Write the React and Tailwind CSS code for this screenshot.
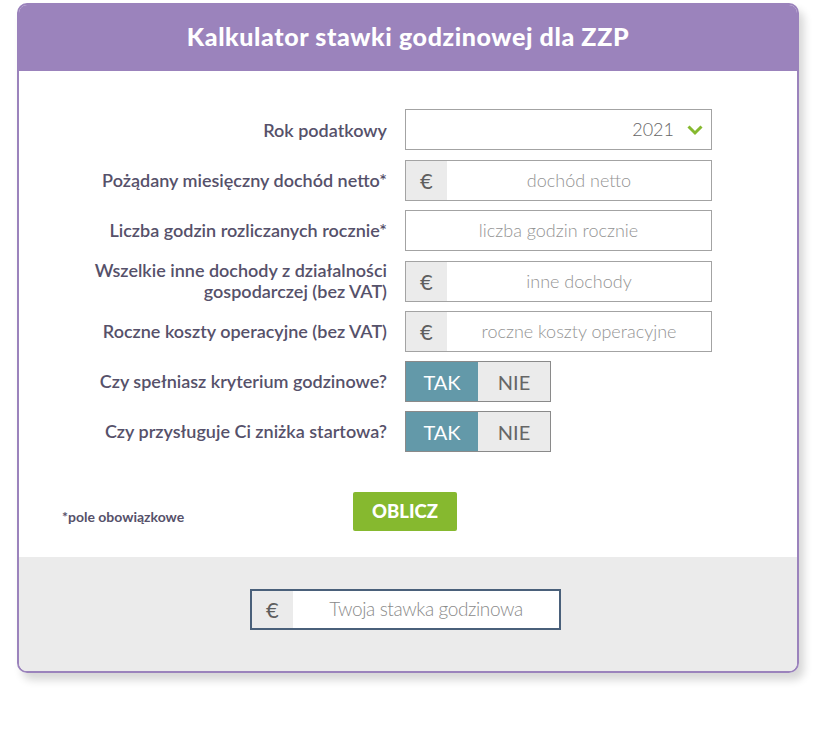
import { useState } from 'react';

const labelCls = 'text-right text-[18px] font-semibold leading-[21px] text-[#56516a]';

function EuroInput({ placeholder }) {
  return (
    <div className="flex h-[41px] w-[307px] border border-[#a3a3a3] bg-white">
      <div className="flex w-[41px] items-center justify-center bg-[#ebebeb] text-[22px] text-[#5e5e5e]">€</div>
      <input
        className="min-w-0 flex-1 bg-transparent text-center text-[18px] font-light text-[#555] outline-none placeholder:text-[#949494]"
        placeholder={placeholder}
      />
    </div>
  );
}

function Toggle({ value, onChange }) {
  return (
    <div className="flex h-[41px] w-[146px] border border-[#8a8a8a]">
      <button
        onClick={() => onChange(true)}
        className={`flex-1 text-[20px] ${value ? 'bg-[#6399a9] text-white' : 'bg-[#ebebeb] text-[#666]'}`}
      >
        TAK
      </button>
      <button
        onClick={() => onChange(false)}
        className={`flex-1 text-[20px] ${!value ? 'bg-[#6399a9] text-white' : 'bg-[#ebebeb] text-[#666]'}`}
      >
        NIE
      </button>
    </div>
  );
}

export default function App() {
  const [hours, setHours] = useState(true);
  const [start, setStart] = useState(true);

  return (
    <div className="min-h-screen bg-white pt-[3px] font-['Lato',sans-serif]">
      <div className="ml-[17px] w-[782px] overflow-hidden rounded-[10px] border-2 border-[#9b83bc] shadow-[5px_7px_9px_rgba(0,0,0,0.16)]">
        {/* naglowek */}
        <div className="flex h-[66px] items-center justify-center bg-[#9b83bc] pb-[2px]">
          <h1 className="text-[25px] font-black tracking-[0.6px] text-white">Kalkulator stawki godzinowej dla ZZP</h1>
        </div>

        <div className="bg-white pb-[26px] pt-[38px]">
          <div className="grid grid-cols-[368px_307px] items-center gap-x-[18px] gap-y-[9px]">
            <div className={labelCls}>Rok podatkowy</div>
            <div className="mb-[1px] flex h-[41px] w-[307px] items-center justify-end border border-[#a3a3a3] bg-white pr-[8px]">
              <span className="mr-[13px] text-[18px] font-light text-[#666]">2021</span>
              <svg width="16" height="12" viewBox="0 0 16 12" fill="none">
                <path d="M1.5 2.5 L8 9 L14.5 2.5" stroke="#86b92f" strokeWidth="3" />
              </svg>
            </div>

            <div className={labelCls}>Pożądany miesięczny dochód netto*</div>
            <EuroInput placeholder="dochód netto" />

            <div className={labelCls}>Liczba godzin rozliczanych rocznie*</div>
            <div className="flex h-[41px] w-[307px] border border-[#a3a3a3] bg-white">
              <input
                className="min-w-0 flex-1 bg-transparent text-center text-[18px] font-light text-[#555] outline-none placeholder:text-[#949494]"
                placeholder="liczba godzin rocznie"
              />
            </div>

            <div className={labelCls}>
              Wszelkie inne dochody z działalności
              <br />
              gospodarczej (bez VAT)
            </div>
            <EuroInput placeholder="inne dochody" />

            <div className={labelCls}>Roczne koszty operacyjne (bez VAT)</div>
            <EuroInput placeholder="roczne koszty operacyjne" />

            <div className={labelCls}>Czy spełniasz kryterium godzinowe?</div>
            <Toggle value={hours} onChange={setHours} />

            <div className={labelCls}>Czy przysługuje Ci zniżka startowa?</div>
            <Toggle value={start} onChange={setStart} />
          </div>

          <div className="mt-[40px] flex items-center">
            <span className="ml-[43px] w-[291px] pt-[9px] text-[14px] font-bold text-[#56516a]">*pole obowiązkowe</span>
            <button className="h-[39px] w-[104px] rounded-[2px] bg-[#86b92f] text-[18.5px] font-black text-white">OBLICZ</button>
          </div>
        </div>

        {/* wynik */}
        <div className="flex justify-center bg-[#ebebeb] pb-[41px] pt-[32px]">
          <div className="ml-[-5px] flex h-[41px] w-[311px] border-2 border-[#4a607a] bg-white">
            <div className="flex w-[41px] items-center justify-center bg-[#ebebeb] text-[22px] text-[#5e5e5e]">€</div>
            <input
              readOnly
              className="min-w-0 flex-1 bg-transparent text-center text-[19px] font-light tracking-[-0.4px] text-[#555] outline-none placeholder:text-[#8a8a8a]"
              placeholder="Twoja stawka godzinowa"
            />
          </div>
        </div>
      </div>
    </div>
  );
}
